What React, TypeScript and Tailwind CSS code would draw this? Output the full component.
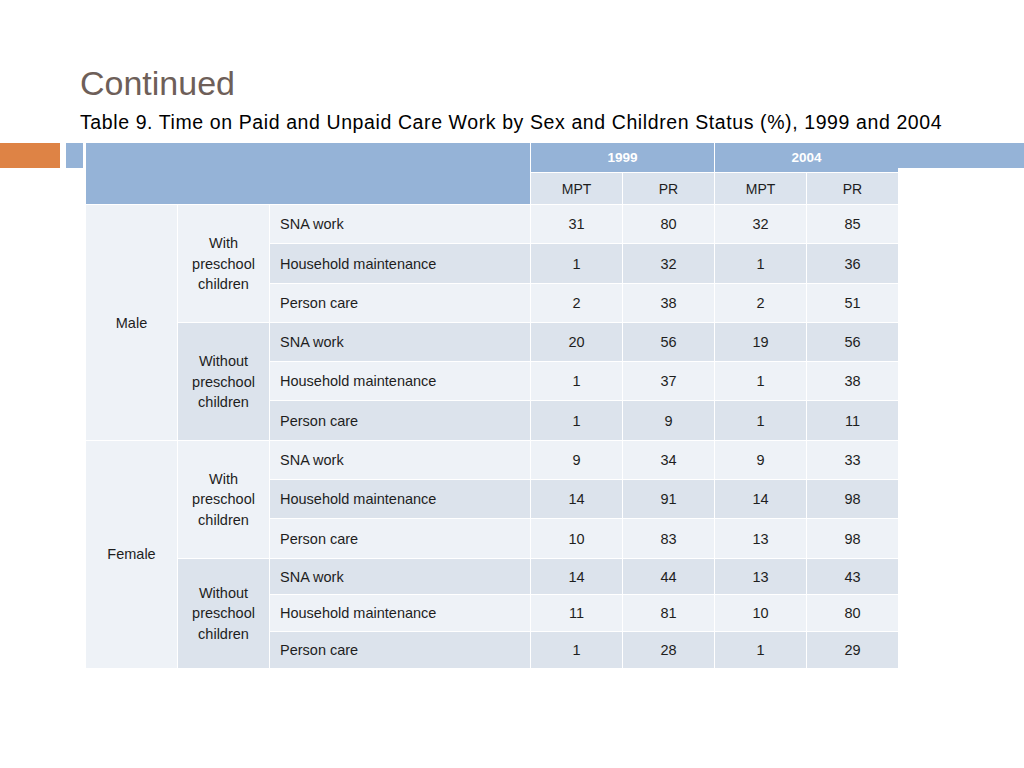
import React from "react";

type Row = { label: string; v: [string, string, string, string] };

const groups: { sex: string; subs: { name: string[]; rows: Row[] }[] }[] = [
  {
    sex: "Male",
    subs: [
      {
        name: ["With", "preschool", "children"],
        rows: [
          { label: "SNA work", v: ["31", "80", "32", "85"] },
          { label: "Household maintenance", v: ["1", "32", "1", "36"] },
          { label: "Person care", v: ["2", "38", "2", "51"] },
        ],
      },
      {
        name: ["Without", "preschool", "children"],
        rows: [
          { label: "SNA work", v: ["20", "56", "19", "56"] },
          { label: "Household maintenance", v: ["1", "37", "1", "38"] },
          { label: "Person care", v: ["1", "9", "1", "11"] },
        ],
      },
    ],
  },
  {
    sex: "Female",
    subs: [
      {
        name: ["With", "preschool", "children"],
        rows: [
          { label: "SNA work", v: ["9", "34", "9", "33"] },
          { label: "Household maintenance", v: ["14", "91", "14", "98"] },
          { label: "Person care", v: ["10", "83", "13", "98"] },
        ],
      },
      {
        name: ["Without", "preschool", "children"],
        rows: [
          { label: "SNA work", v: ["14", "44", "13", "43"] },
          { label: "Household maintenance", v: ["11", "81", "10", "80"] },
          { label: "Person care", v: ["1", "28", "1", "29"] },
        ],
      },
    ],
  },
];

const LIGHT = "bg-[#eef2f7]";
const DARK = "bg-[#dce3ec]";

export default function App() {
  const cells: React.ReactNode[] = [];
  let rowIndex = 0;
  groups.forEach((g, gi) => {
    g.subs.forEach((s, si) => {
      s.rows.forEach((r, ri) => {
        const bg = rowIndex % 2 === 0 ? LIGHT : DARK;
        if (si === 0 && ri === 0) {
          cells.push(
            <div
              key={`sex-${gi}`}
              className={`row-span-6 ${LIGHT} flex items-center justify-center pt-[2px]`}
            >
              {g.sex}
            </div>
          );
        }
        if (ri === 0) {
          cells.push(
            <div
              key={`sub-${gi}-${si}`}
              className={`row-span-3 ${si === 0 ? LIGHT : DARK} flex flex-col items-center justify-center leading-[20.5px] text-center pt-[1px]`}
            >
              {s.name.map((n) => (
                <span key={n}>{n}</span>
              ))}
            </div>
          );
        }
        cells.push(
          <div
            key={`l-${rowIndex}`}
            className={`${bg} flex items-center pl-[10px] pt-[2px]`}
          >
            {r.label}
          </div>
        );
        r.v.forEach((v, vi) => {
          cells.push(
            <div
              key={`v-${rowIndex}-${vi}`}
              className={`${bg} flex items-center justify-center pt-[2px]`}
            >
              {v}
            </div>
          );
        });
        rowIndex++;
      });
    });
  });

  return (
    <div
      className="w-[1024px] h-[768px] bg-white overflow-hidden"
      style={{ fontFamily: '"Liberation Sans", Arial, sans-serif' }}
    >
      <div className="pl-[80px] pt-[63px]">
        <h1 className="text-[34px] leading-[40px] text-[#6e5f59] font-normal">
          Continued
        </h1>
        <p className="mt-[7px] text-[19.5px] leading-[24px] tracking-[0.6px] text-black">
          Table 9. Time on Paid and Unpaid Care Work by Sex and Children Status
          (%), 1999 and 2004
        </p>
      </div>
      <div className="mt-[9px] flex items-start">
        <div className="w-[60px] h-[25px] bg-[#de8345] shrink-0" />
        <div className="ml-[6px] w-[17px] h-[25px] bg-[#95b3d7] shrink-0" />
        <div
          className="ml-[3px] grid shrink-0 gap-x-[1px] gap-y-[1px] text-[14.5px] text-[#1e1e1e] grid-cols-[91px_91px_260px_91px_91px_91px_91px] grid-rows-[29px_31px_repeat(9,38.3px)_repeat(3,35.7px)]"
        >
          <div className="col-span-3 row-span-2 bg-[#95b3d7]" />
          <div className="col-span-2 bg-[#95b3d7] flex items-center justify-center text-white font-bold text-[13.5px] pt-[1px]">
            1999
          </div>
          <div className="col-span-2 bg-[#95b3d7] flex items-center justify-center text-white font-bold text-[13.5px] pt-[1px]">
            2004
          </div>
          {["MPT", "PR", "MPT", "PR"].map((h, i) => (
            <div
              key={i}
              className="bg-[#dbe3ed] flex items-center justify-center text-[14px] pt-[1px]"
            >
              {h}
            </div>
          ))}
          {cells}
        </div>
        <div className="flex-1 h-[25px] bg-[#95b3d7]" />
      </div>
    </div>
  );
}
